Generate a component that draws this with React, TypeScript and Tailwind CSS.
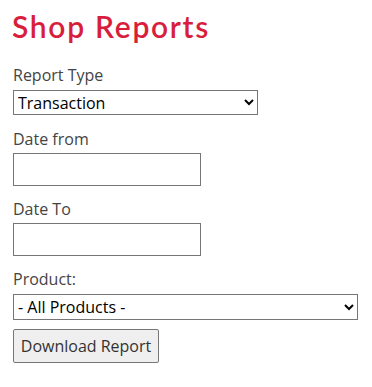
import { useState } from "react";

const labelCls = "block text-[16px] leading-6 text-[#444444]";

const App: React.FC = () => {
	const [reportType, setReportType] = useState("transaction");
	const [product, setProduct] = useState("all");

	return (
		<div className="min-h-screen bg-white px-[13px] pt-[8px] font-['Open_Sans',sans-serif]">
			<h1 className="font-['Lato',sans-serif] text-[30px] font-semibold leading-9 tracking-[1.7px] text-[#d81e3c] -ml-[1px]">
				Shop Reports
			</h1>

			<label className={`${labelCls} mt-[19px] mb-[3px]`}>Report Type</label>
			<select
				value={reportType}
				onChange={(e) => setReportType(e.target.value)}
				className="block h-[25px] w-[245px] border border-[#767676] bg-white text-[16px] text-black"
			>
				<option value="transaction">Transaction</option>
				<option value="summary">Summary</option>
			</select>

			<label className={`${labelCls} mt-[12px] mb-[2px]`}>Date from</label>
			<input
				type="text"
				className="block h-[33px] w-[188px] border border-[#767676] bg-white px-1 text-[16px]"
			/>

			<label className={`${labelCls} mt-[11px] mb-[2px]`}>Date To</label>
			<input
				type="text"
				className="block h-[33px] w-[188px] border border-[#767676] bg-white px-1 text-[16px]"
			/>

			<label className={`${labelCls} mt-[11px] mb-[3px]`}>Product:</label>
			<select
				value={product}
				onChange={(e) => setProduct(e.target.value)}
				className="block h-[26px] w-[345px] border border-[#767676] bg-white text-[16px] text-black"
			>
				<option value="all">- All Products -</option>
			</select>

			<button className="mt-[9px] block h-[34px] w-[146px] rounded-[2px] border border-[#767676] bg-[#efefef] text-[16px] text-[#333333]">
				Download Report
			</button>
		</div>
	);
};

export default App;
